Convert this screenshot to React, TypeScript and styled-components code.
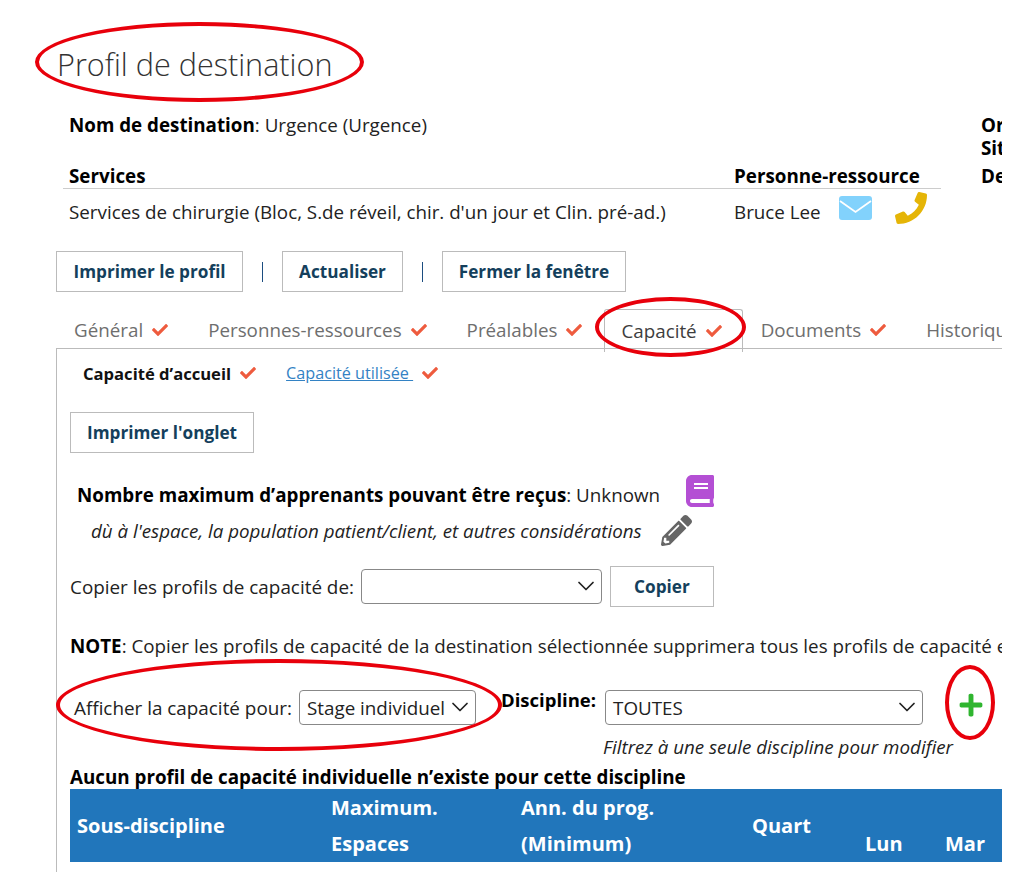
import React from "react";
import styled, { createGlobalStyle } from "styled-components";
import { FaBook, FaCheck, FaPencilAlt, FaPhone, FaPlus } from "react-icons/fa";
import { ChevronDown } from "lucide-react";

const Global = createGlobalStyle`
  html, body { margin: 0; padding: 0; background: #fff; }
  body { font-family: "Open Sans", "Liberation Sans", sans-serif; color: #222; }
`;

const Page = styled.div`
  position: relative;
  display: flex;
  flex-direction: column;
  width: 1002px;
  height: 872px;
  overflow: hidden;
  padding-left: 56px;
  box-sizing: border-box;
  white-space: nowrap;
`;

const Title = styled.h1`
  margin: 0;
  padding: 42px 0 0 1px;
  height: 93px;
  flex: none;
  box-sizing: border-box;
  font-size: 30.6px;
  line-height: 44px;
  font-weight: 300;
  color: #333;
`;

const Info = styled.div`
  display: flex;
  flex: none;
  margin-left: 7px;
  height: 158px;
`;

const InfoMain = styled.div`
  width: 878px;
  flex: none;
`;

const NameLine = styled.div`
  height: 69px;
  padding: 20px 0 0 6px;
  box-sizing: border-box;
  font-size: 18.8px;
  line-height: 24px;
  color: #222;
  b { color: #000; }
`;

const ServiceHead = styled.div`
  display: flex;
  height: 26px;
  border-bottom: 1px solid #ccc;
  padding-left: 6px;
  font-size: 18.8px;
  line-height: 28px;
  font-weight: 700;
  color: #000;
`;

const ServiceRow = styled.div`
  display: flex;
  align-items: center;
  padding: 4px 0 0 6px;
  height: 42px;
  box-sizing: border-box;
  font-size: 18.8px;
  color: #222;
`;

const ServiceCol = styled.div`
  width: 665px;
  flex: none;
`;

const ContactName = styled.span`
  width: 105px;
  flex: none;
`;

const PhoneIcon = styled(FaPhone)`
  color: #e5b507;
  font-size: 32px;
  margin: -8px 0 0 23px;
`;

const Side = styled.div`
  margin-left: 40px;
  padding-top: 21px;
  font-size: 18.8px;
  font-weight: 700;
  line-height: 23px;
  color: #000;
  div:last-child { margin-top: 5px; }
`;

const ButtonRow = styled.div`
  display: flex;
  flex: none;
  align-items: center;
  height: 41px;
`;

const Button = styled.button<{ $w: number; $ml?: number }>`
  box-sizing: border-box;
  height: 41px;
  width: ${(p) => p.$w}px;
  margin-left: ${(p) => p.$ml ?? 0}px;
  flex: none;
  padding: 0;
  background: #fff;
  border: 1px solid #bbb;
  border-radius: 0;
  font-family: inherit;
  font-size: 17.2px;
  font-weight: 700;
  color: #143f5c;
`;

const Sep = styled.span`
  width: 1px;
  height: 20px;
  flex: none;
  margin: 0 19px;
  background: #1c4d80;
`;

const Tabs = styled.div`
  display: flex;
  flex: none;
  height: 40px;
  margin-top: 17px;
  box-sizing: border-box;
  padding-left: 1px;
  border-bottom: 1px solid #bbb;
`;

const Tab = styled.div<{ $active?: boolean }>`
  display: flex;
  align-items: center;
  flex: none;
  box-sizing: border-box;
  height: ${(p) => (p.$active ? "43px" : "39px")};
  padding: ${(p) => (p.$active ? "0 20px 0 16px" : "1px 19px 0 16px")};
  margin: ${(p) => (p.$active ? "0 1px 0 -1px" : "0 3px 0 0")};
  font-size: 18.8px;
  color: ${(p) => (p.$active ? "#3d3d3d" : "#6e6e6e")};
  border: 1px solid ${(p) => (p.$active ? "#bbb" : "transparent")};
  border-bottom: 0;
  border-radius: 3px 3px 0 0;
`;

const Check = styled(FaCheck)`
  color: #ee5b3e;
  font-size: 16px;
  margin-left: 9px;
  flex: none;
`;

const Panel = styled.div`
  flex: 1;
  border-left: 1px solid #bbb;
  padding-left: 13px;
`;

const SubTabs = styled.div`
  display: flex;
  align-items: center;
  height: 48px;
  padding: 0 0 0 13px;
`;

const SubActive = styled.span`
  font-size: 16.6px;
  font-weight: 700;
  color: #111;
`;

const SubLink = styled.a`
  margin-left: 30px;
  font-size: 16.2px;
  white-space: pre;
  color: #3382c4;
  text-decoration: underline;
`;

const SubCheck = styled(Check)`
  margin-left: 9px;
`;

const PrintRow = styled.div`
  margin-top: 15px;
  height: 41px;
`;

const MaxRow = styled.div`
  display: flex;
  align-items: center;
  height: 32px;
  margin-top: 26px;
  padding-left: 7px;
  font-size: 18.8px;
  color: #222;
  b { color: #000; }
`;

const BookIcon = styled(FaBook)`
  color: #b44fd4;
  font-size: 32px;
  margin: -9px 0 0 24px;
`;

const NoteItalic = styled.div`
  display: flex;
  align-items: center;
  height: 32px;
  margin-top: 3px;
  padding-left: 21px;
  font-size: 18.76px;
  font-style: italic;
  color: #222;
`;

const PencilIcon = styled(FaPencilAlt)`
  color: #666;
  font-size: 31px;
  margin-left: 19px;
`;

const CopyRow = styled.div`
  display: flex;
  align-items: center;
  height: 41px;
  margin-top: 20px;
  font-size: 18.86px;
  color: #222;
`;

const SelectBox = styled.div<{ $w: number; $ml: number }>`
  position: relative;
  box-sizing: border-box;
  display: flex;
  align-items: center;
  flex: none;
  width: ${(p) => p.$w}px;
  height: 35px;
  margin-left: ${(p) => p.$ml}px;
  padding-left: 7px;
  border: 1px solid #888;
  border-radius: 4px;
  background: #fff;
  font-size: 18.8px;
  color: #222;
`;

const Chevron = styled(ChevronDown)`
  position: absolute;
  right: 1px;
  top: 2px;
  width: 28px;
  height: 28px;
  color: #222;
  stroke-width: 1.5;
`;

const NoteLine = styled.div`
  margin-top: 21px;
  height: 36px;
  line-height: 36px;
  font-size: 18.8px;
  color: #222;
  b { color: #000; }
`;

const FilterRow = styled.div`
  display: flex;
  align-items: flex-start;
  height: 35px;
  margin-top: 26px;
`;

const FilterLabel = styled.span`
  flex: none;
  width: 229px;
  padding-left: 4px;
  box-sizing: border-box;
  margin-top: 5px;
  line-height: 26px;
  font-size: 18.86px;
`;

const DisciplineLabel = styled.span`
  flex: none;
  margin: -3px 0 0 25px;
  line-height: 26px;
  font-size: 18.5px;
  font-weight: 700;
  color: #000;
`;

const Plus = styled(FaPlus)`
  flex: none;
  color: #2fb52f;
  font-size: 26px;
  margin: 2px 0 0 35px;
`;

const Hint = styled.div`
  margin: 10px 0 0 533px;
  font-size: 18.8px;
  line-height: 24px;
  font-style: italic;
  color: #222;
`;

const EmptyMsg = styled.div`
  margin-top: 6px;
  height: 24px;
  line-height: 24px;
  font-size: 18.8px;
  font-weight: 700;
  color: #000;
`;

const TableHead = styled.div`
  display: grid;
  grid-template-columns: 254px 190px 231px 113px 80px 1fr;
  height: 73px;
  background: #2176bb;
  color: #fff;
  font-size: 20px;
  font-weight: 700;
`;

const HeadCell = styled.div<{ $align?: string }>`
  display: flex;
  flex-direction: column;
  justify-content: ${(p) => p.$align || "center"};
  padding-left: 7px;
  line-height: 36px;
`;

const Ellipse = styled.div<{ $l: number; $t: number; $w: number; $h: number }>`
  position: absolute;
  left: ${(p) => p.$l}px;
  top: ${(p) => p.$t}px;
  width: ${(p) => p.$w}px;
  height: ${(p) => p.$h}px;
  box-sizing: border-box;
  border: 4px solid #e8000b;
  border-radius: 50%;
  pointer-events: none;
`;

const MailSvg = styled.svg`
  width: 33px;
  height: 25px;
  margin-top: -7px;
  flex: none;
`;

const MailIcon = () => (
  <MailSvg viewBox="0 0 33 25">
    <rect width="33" height="24" rx="3" fill="#82d2fc" />
    <path d="M1 5 L16.5 16 L32 5" fill="none" stroke="#fff" strokeWidth="1.8" />
  </MailSvg>
);

const tabs = ["Général", "Personnes-ressources", "Préalables", "Capacité", "Documents", "Historique"];

export default function App() {
  return (
    <Page>
      <Global />
      <Title>Profil de destination</Title>
      <Info>
        <InfoMain>
          <NameLine>
            <b>Nom de destination</b>: Urgence (Urgence)
          </NameLine>
          <ServiceHead>
            <ServiceCol>Services</ServiceCol>
            <span>Personne-ressource</span>
          </ServiceHead>
          <ServiceRow>
            <ServiceCol>Services de chirurgie (Bloc, S.de réveil, chir. d'un jour et Clin. pré-ad.)</ServiceCol>
            <ContactName>Bruce Lee</ContactName>
            <MailIcon />
            <PhoneIcon />
          </ServiceRow>
        </InfoMain>
        <Side>
          <div>Organisation</div>
          <div>Site</div>
          <div>Destination</div>
        </Side>
      </Info>
      <ButtonRow>
        <Button $w={187}>Imprimer le profil</Button>
        <Sep />
        <Button $w={121}>Actualiser</Button>
        <Sep />
        <Button $w={184}>Fermer la fenêtre</Button>
      </ButtonRow>
      <Tabs>
        {tabs.map((t) => (
          <Tab key={t} $active={t === "Capacité"}>
            {t}
            <Check />
          </Tab>
        ))}
      </Tabs>
      <Panel>
        <SubTabs>
          <SubActive>Capacité d’accueil</SubActive>
          <Check />
          <SubLink>Capacité utilisée </SubLink>
          <SubCheck />
        </SubTabs>
        <PrintRow>
          <Button $w={184}>Imprimer l'onglet</Button>
        </PrintRow>
        <MaxRow>
          <b>Nombre maximum d’apprenants pouvant être reçus</b>: Unknown
          <BookIcon />
        </MaxRow>
        <NoteItalic>
          dù à l'espace, la population patient/client, et autres considérations
          <PencilIcon />
        </NoteItalic>
        <CopyRow>
          Copier les profils de capacité de:
          <SelectBox $w={241} $ml={7}>
            <Chevron />
          </SelectBox>
          <Button $w={104} $ml={8}>Copier</Button>
        </CopyRow>
        <NoteLine>
          <b>NOTE</b>: Copier les profils de capacité de la destination sélectionnée supprimera tous les profils de capacité existants
        </NoteLine>
        <FilterRow>
          <FilterLabel>Afficher la capacité pour:</FilterLabel>
          <SelectBox $w={177} $ml={0}>
            Stage individuel
            <Chevron />
          </SelectBox>
          <DisciplineLabel>Discipline:</DisciplineLabel>
          <SelectBox $w={318} $ml={9}>
            TOUTES
            <Chevron />
          </SelectBox>
          <Plus />
        </FilterRow>
        <Hint>Filtrez à une seule discipline pour modifier</Hint>
        <EmptyMsg>Aucun profil de capacité individuelle n’existe pour cette discipline</EmptyMsg>
        <TableHead>
          <HeadCell>Sous-discipline</HeadCell>
          <HeadCell>
            <span>Maximum.</span>
            <span>Espaces</span>
          </HeadCell>
          <HeadCell>
            <span>Ann. du prog.</span>
            <span>(Minimum)</span>
          </HeadCell>
          <HeadCell>Quart</HeadCell>
          <HeadCell $align="flex-end">Lun</HeadCell>
          <HeadCell $align="flex-end">Mar</HeadCell>
        </TableHead>
      </Panel>
      <Ellipse $l={35} $t={22} $w={329} $h={80} />
      <Ellipse $l={595} $t={297} $w={151} $h={60} />
      <Ellipse $l={56} $t={659} $w={446} $h={92} />
      <Ellipse $l={945} $t={665} $w={50} $h={75} />
    </Page>
  );
}
